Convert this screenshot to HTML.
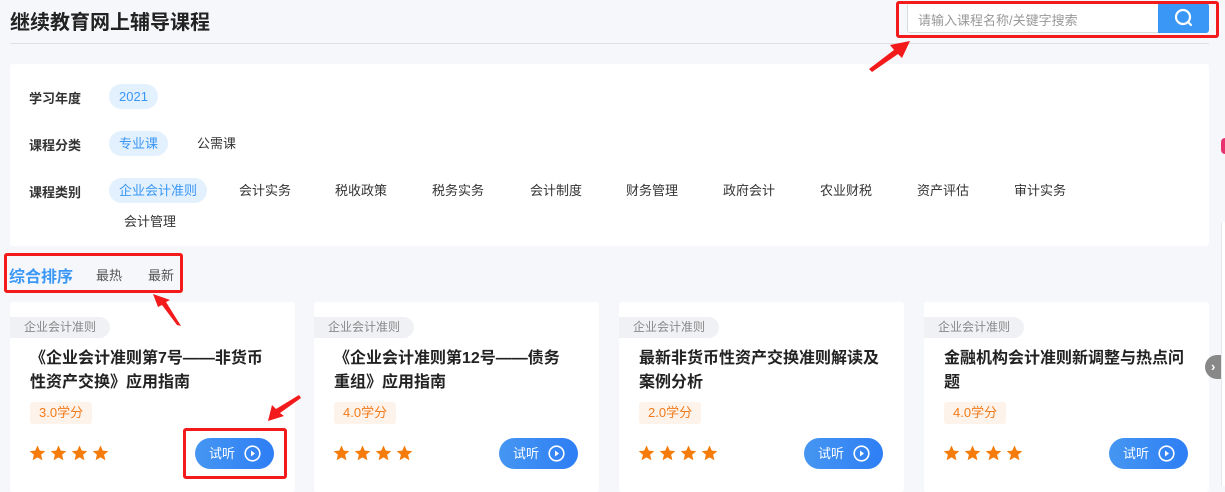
<!DOCTYPE html><html><head><meta charset="utf-8"><style>
*{margin:0;padding:0;box-sizing:border-box}
body{width:1225px;height:486px;overflow:hidden;background:#f5f7fa;font-family:"Liberation Sans","Noto Sans CJK SC",sans-serif;position:relative;color:#333}
.abs{position:absolute}
.title{left:10px;top:6px;font-size:20px;font-weight:bold;color:#222}
.line{left:10px;top:43px;width:1199px;height:1px;background:#dde0e5}
.search{left:907px;top:3px;width:302px;height:30px;border:1px solid #d8dbe0;border-radius:3px;background:#fff}
.search span{position:absolute;left:10px;top:6px;font-size:13px;color:#999}
.sbtn{position:absolute;right:-1px;top:-1px;width:51px;height:30px;background:#3a97f6;border-radius:0 3px 3px 0}
.panel{left:10px;top:64px;width:1199px;height:182px;background:#fff;border-radius:3px}
.lab{font-size:13px;font-weight:bold;color:#333}
.tag{font-size:13px;color:#333;padding:0 10px;height:25px;line-height:25px;border-radius:13px}
.on{background:#e3f0fd;color:#3a97f6}
.card{top:302px;width:285px;height:190px;background:#fff;border-radius:3px}
.ct{position:absolute;left:0;top:15px;height:21px;line-height:21px;padding:0 14px;background:#f0f1f4;color:#888;font-size:12px;border-radius:0 11px 11px 0}
.ch{position:absolute;left:20px;top:45px;width:236px;font-size:16px;font-weight:bold;line-height:24px;color:#222}
.cr{position:absolute;left:20px;top:100px;height:22px;line-height:22px;padding:0 9px;background:#fef3ea;color:#f27a1a;font-size:13px;border-radius:3px}
.stars{position:absolute;left:19px;top:143px}
.btn{position:absolute;left:185px;top:136px;width:79px;height:31px;border-radius:16px;background:linear-gradient(90deg,#4596f2,#2e7ef5);color:#fff;font-size:13px;line-height:31px;padding-left:14px}
.btn svg{position:absolute;right:13px;top:7px}
.red{border:3px solid #f21a1a;border-radius:3px}
</style></head><body>
<div class="abs title">继续教育网上辅导课程</div>
<div class="abs line"></div>
<div class="abs search"><span>请输入课程名称/关键字搜索</span><div class="sbtn"><svg width="51" height="30"><circle cx="25" cy="14" r="7" fill="none" stroke="#fff" stroke-width="2.2"/><line x1="30" y1="19" x2="33" y2="22" stroke="#fff" stroke-width="2.2" stroke-linecap="round"/></svg></div></div>
<div class="abs panel"></div>
<div class="abs lab" style="left:29px;top:88px">学习年度</div>
<div class="abs tag on" style="left:109px;top:84px">2021</div>
<div class="abs lab" style="left:29px;top:135px">课程分类</div>
<div class="abs tag on" style="left:109px;top:131px">专业课</div>
<div class="abs tag" style="left:187px;top:131px">公需课</div>
<div class="abs lab" style="left:29px;top:182px">课程类别</div>
<div class="abs tag on" style="left:109px;top:178px">企业会计准则</div>
<div class="abs tag" style="left:229px;top:178px">会计实务</div>
<div class="abs tag" style="left:325px;top:178px">税收政策</div>
<div class="abs tag" style="left:422px;top:178px">税务实务</div>
<div class="abs tag" style="left:520px;top:178px">会计制度</div>
<div class="abs tag" style="left:616px;top:178px">财务管理</div>
<div class="abs tag" style="left:713px;top:178px">政府会计</div>
<div class="abs tag" style="left:810px;top:178px">农业财税</div>
<div class="abs tag" style="left:907px;top:178px">资产评估</div>
<div class="abs tag" style="left:1004px;top:178px">审计实务</div>
<div class="abs tag" style="left:114px;top:209px">会计管理</div>
<div class="abs" style="left:9px;top:263px;font-size:16px;font-weight:bold;color:#3a97f6">综合排序</div>
<div class="abs" style="left:96px;top:265px;font-size:13px;color:#555">最热</div>
<div class="abs" style="left:148px;top:265px;font-size:13px;color:#555">最新</div>

<svg width="0" height="0" style="position:absolute"><defs><path id="st" d="M8.5 0.5L10.8 5.6L16.3 6.1L12.1 9.8L13.4 15.3L8.5 12.4L3.6 15.3L4.9 9.8L0.7 6.1L6.2 5.6Z" fill="#f57c0a"/></defs></svg>

<div class="abs card" style="left:10px"><div class="ct">企业会计准则</div><div class="ch">《企业会计准则第7号——非货币性资产交换》应用指南</div><div class="cr">3.0学分</div><svg class="stars" width="86" height="17"><use href="#st"/><use href="#st" x="21"/><use href="#st" x="42"/><use href="#st" x="63"/></svg><div class="btn">试听<svg width="17" height="17"><circle cx="8.5" cy="8.5" r="7.3" fill="none" stroke="#fff" stroke-width="1.6"/><path d="M7 5.5L11 8.5L7 11.5Z" fill="#fff"/></svg></div></div>
<div class="abs card" style="left:314px"><div class="ct">企业会计准则</div><div class="ch">《企业会计准则第12号——债务重组》应用指南</div><div class="cr">4.0学分</div><svg class="stars" width="86" height="17"><use href="#st"/><use href="#st" x="21"/><use href="#st" x="42"/><use href="#st" x="63"/></svg><div class="btn">试听<svg width="17" height="17"><circle cx="8.5" cy="8.5" r="7.3" fill="none" stroke="#fff" stroke-width="1.6"/><path d="M7 5.5L11 8.5L7 11.5Z" fill="#fff"/></svg></div></div>
<div class="abs card" style="left:619px"><div class="ct">企业会计准则</div><div class="ch" style="width:252px">最新非货币性资产交换准则解读及案例分析</div><div class="cr">2.0学分</div><svg class="stars" width="86" height="17"><use href="#st"/><use href="#st" x="21"/><use href="#st" x="42"/><use href="#st" x="63"/></svg><div class="btn">试听<svg width="17" height="17"><circle cx="8.5" cy="8.5" r="7.3" fill="none" stroke="#fff" stroke-width="1.6"/><path d="M7 5.5L11 8.5L7 11.5Z" fill="#fff"/></svg></div></div>
<div class="abs card" style="left:924px"><div class="ct">企业会计准则</div><div class="ch" style="width:252px">金融机构会计准则新调整与热点问题</div><div class="cr">4.0学分</div><svg class="stars" width="86" height="17"><use href="#st"/><use href="#st" x="21"/><use href="#st" x="42"/><use href="#st" x="63"/></svg><div class="btn">试听<svg width="17" height="17"><circle cx="8.5" cy="8.5" r="7.3" fill="none" stroke="#fff" stroke-width="1.6"/><path d="M7 5.5L11 8.5L7 11.5Z" fill="#fff"/></svg></div></div>

<div class="abs" style="left:1205px;top:355px;width:20px;height:24px;border-radius:12px 0 0 12px;background:#888;color:#fff;font-size:13px;line-height:24px;padding-left:6px;font-weight:bold">›</div>
<div class="abs" style="left:1221px;top:138px;width:8px;height:16px;border-radius:8px;background:#e8336e"></div>
<div class="abs" style="left:1221px;top:222px;width:4px;height:264px;background:#fff;border-left:1px solid #e5e7ea"></div>

<div class="abs red" style="left:896px;top:1px;width:323px;height:37px"></div>
<div class="abs red" style="left:4px;top:253px;width:179px;height:40px"></div>
<div class="abs red" style="left:183px;top:428px;width:104px;height:51px"></div>
<svg class="abs" style="left:0;top:0" width="1225" height="486">
<polygon fill="#f21a1a" points="869,69 894,50 890,45 910,41 902,58 898,54 872,72"/>
<polygon fill="#f21a1a" points="153,294 170,300 166,302 181,326 177,325 162,305 158,307"/>
<polygon fill="#f21a1a" points="268,421 272,405 276,409 299,395 301,398 280,413 284,416"/>
</svg>
</body></html>
